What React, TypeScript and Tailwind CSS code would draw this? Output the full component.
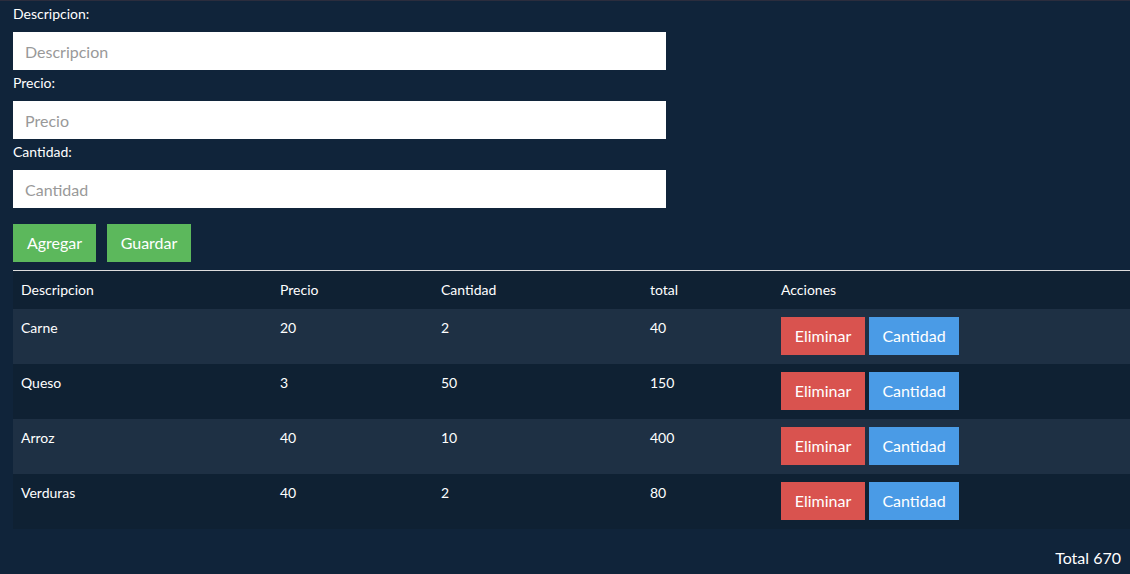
import React, { useState } from 'react';

interface Producto {
    descripcion: string;
    precio: number;
    cantidad: number;
}

const inicial: Producto[] = [
    { descripcion: 'Carne', precio: 20, cantidad: 2 },
    { descripcion: 'Queso', precio: 3, cantidad: 50 },
    { descripcion: 'Arroz', precio: 40, cantidad: 10 },
    { descripcion: 'Verduras', precio: 40, cantidad: 2 },
];

const Campo = ({ label, placeholder }: { label: string; placeholder: string }) => (
    <div>
        <label className="block mt-[3px] mb-2 text-[14px] leading-5 text-white">{label}</label>
        <input
            type="text"
            placeholder={placeholder}
            className="block w-[653px] h-[38px] px-3 bg-white text-[16px] text-gray-800 placeholder:text-[#999] outline-none"
        />
    </div>
);

function App() {
    const [productos] = useState<Producto[]>(inicial);
    const total = productos.reduce((acc, p) => acc + p.precio * p.cantidad, 0);

    return (
        <div className="min-h-[574px] bg-[#10243a] border-t border-[#2b2d3d] pl-[13px] text-white" style={{ fontFamily: 'Lato, "Open Sans", sans-serif' }}>
            <Campo label="Descripcion:" placeholder="Descripcion" />
            <Campo label="Precio:" placeholder="Precio" />
            <Campo label="Cantidad:" placeholder="Cantidad" />

            <div className="flex gap-[11px] mt-4">
                <button className="h-[38px] w-[83px] bg-[#5cb85c] text-[16px] text-white">Agregar</button>
                <button className="h-[38px] w-[84px] bg-[#5cb85c] text-[16px] text-white">Guardar</button>
            </div>

            <table className="mt-2 w-full table-fixed border-t border-[#dddddd] text-[14px] leading-5">
                <colgroup>
                    <col className="w-[259px]" />
                    <col className="w-[161px]" />
                    <col className="w-[209px]" />
                    <col className="w-[131px]" />
                    <col />
                </colgroup>
                <thead>
                    <tr className="bg-[#0f2133]">
                        <th className="text-left font-normal px-2 py-[9px]">Descripcion</th>
                        <th className="text-left font-normal px-2 py-[9px]">Precio</th>
                        <th className="text-left font-normal px-2 py-[9px]">Cantidad</th>
                        <th className="text-left font-normal px-2 py-[9px]">total</th>
                        <th className="text-left font-normal px-2 py-[9px]">Acciones</th>
                    </tr>
                </thead>
                <tbody>
                    {productos.map((p, i) => (
                        <tr key={p.descripcion} className={i % 2 === 0 ? 'bg-[#1e3044]' : 'bg-[#0f2133]'}>
                            <td className="align-top px-2 pt-[9px] pb-2">{p.descripcion}</td>
                            <td className="align-top px-2 pt-[9px] pb-2">{p.precio}</td>
                            <td className="align-top px-2 pt-[9px] pb-2">{p.cantidad}</td>
                            <td className="align-top px-2 pt-[9px] pb-2">{p.precio * p.cantidad}</td>
                            <td className="align-top px-2 pt-2 pb-[9px]">
                                <div className="flex gap-1">
                                    <button className="h-[38px] w-[84px] bg-[#d9534f] text-[16px] text-white">Eliminar</button>
                                    <button className="h-[38px] w-[90px] bg-[#4a9be6] text-[16px] text-white">Cantidad</button>
                                </div>
                            </td>
                        </tr>
                    ))}
                </tbody>
            </table>

            <div className="text-right pr-[9px] pt-[19px] text-[16px] leading-5">Total {total}</div>
        </div>
    );
}

export default App;
